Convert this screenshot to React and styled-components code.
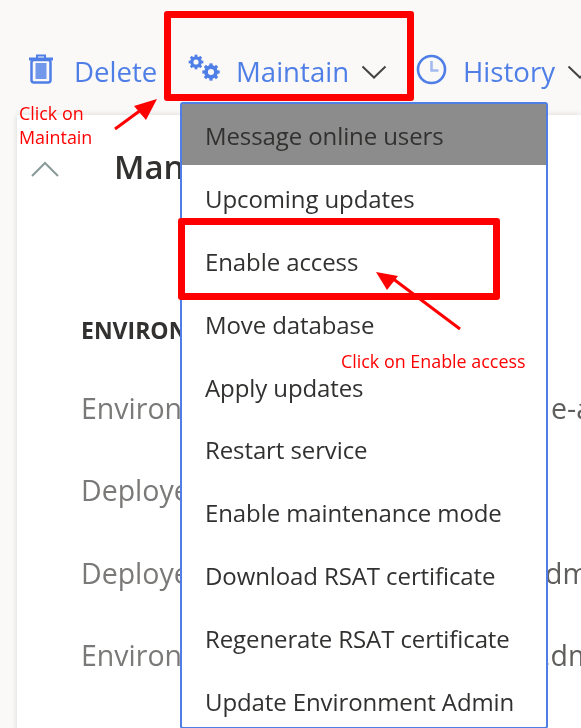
import React from "react";
import styled, { createGlobalStyle } from "styled-components";

const Global = createGlobalStyle`
  html, body { margin: 0; padding: 0; }
  body { background: #faf9f8; font-family: "Open Sans", "Noto Sans", sans-serif; }
`;

const Page = styled.div`
  position: relative;
  width: 581px;
  height: 728px;
  overflow: hidden;
  background: #faf9f8;
  filter: blur(0.35px);
`;

const Toolbar = styled.div`
  display: flex;
  align-items: center;
  height: 56px;
  padding: 43px 0 0 28px;
  white-space: nowrap;
`;

const ToolButton = styled.div`
  display: flex;
  align-items: center;
  flex: none;
  width: ${(p) => p.$w}px;
  color: #4f7fe6;
  font-size: 27.6px;
`;

const ToolIcon = styled.svg`
  flex: none;
  margin-bottom: 4px;
`;

const ToolLabel = styled.span`
  margin-left: ${(p) => p.$gap}px;
  margin-right: 12px;
`;

const ChevronIcon = styled.svg`
  flex: none;
  margin-top: 1px;
`;

const Card = styled.section`
  margin: 16px 0 0 17px;
  height: 620px;
  background: #fff;
  box-shadow: 0 0 6px rgba(0, 0, 0, 0.14);
  padding: 0 0 0 64px;
`;

const CardTitle = styled.h2`
  margin: 0;
  padding: 28px 0 0 33px;
  height: 75px;
  box-sizing: border-box;
  display: flex;
  align-items: center;
  font-size: 33px;
  font-weight: 600;
  line-height: 47px;
  color: #323130;
  white-space: nowrap;
`;

const Collapse = styled.svg`
  position: absolute;
  left: 30px;
  top: 160px;
`;

const SectionLabel = styled.div`
  margin-top: 125px;
  font-size: 23px;
  font-weight: 700;
  line-height: 30px;
  color: #323130;
  white-space: nowrap;
`;

const Rows = styled.div`
  margin-top: 46px;
  display: flex;
  flex-direction: column;
  gap: 48.3px;
`;

const Row = styled.div`
  display: flex;
  height: 34px;
  line-height: 34px;
  font-size: 28.5px;
  color: #7a7977;
  white-space: nowrap;
  margin-top: ${(p) => p.$drop || 0}px;
`;

const RowLabel = styled.span`
  width: ${(p) => p.$w}px;
  flex: none;
`;

const RowValue = styled.span`
  color: #605e5c;
  flex: none;
`;

const Menu = styled.ul`
  position: absolute;
  left: 180px;
  top: 102px;
  width: 368px;
  height: 627px;
  box-sizing: border-box;
  margin: 0;
  padding: 0;
  list-style: none;
  background: #fff;
  border: 2px solid #4f7fe6;
  border-radius: 3px;
`;

const MenuItem = styled.li`
  height: ${(p) => (p.$active ? 61 : 62.8)}px;
  box-sizing: border-box;
  display: flex;
  align-items: center;
  padding: ${(p) => (p.$active ? 2 : 4.6)}px 0 0 23px;
  font-size: 24px;
  letter-spacing: -0.1px;
  color: #323130;
  background: ${(p) => (p.$active ? "#8c8c8c" : "transparent")};
  white-space: nowrap;
`;

const RedBox = styled.div`
  position: absolute;
  box-sizing: border-box;
  left: ${(p) => p.$x}px;
  top: ${(p) => p.$y}px;
  width: ${(p) => p.$w}px;
  height: ${(p) => p.$h}px;
  border: 7px solid #ff0000;
  border-radius: 3px;
`;

const Note = styled.div`
  position: absolute;
  left: ${(p) => p.$x}px;
  top: ${(p) => p.$y}px;
  font-size: 17.9px;
  line-height: 24px;
  color: #ff0000;
  white-space: nowrap;
`;

const Overlay = styled.svg`
  position: absolute;
  left: 0;
  top: 0;
`;

const Trash = () => (
  <ToolIcon width="26" height="32" viewBox="0 0 26 32">
    <path d="M9 5V2.5h8V5" fill="none" stroke="#4f7fe6" strokeWidth="2" />
    <path d="M1 6h24" stroke="#4f7fe6" strokeWidth="3" />
    <rect x="3.5" y="7" width="19" height="22.5" rx="2.5" fill="none" stroke="#4f7fe6" strokeWidth="2.5" />
    <rect x="7.5" y="10" width="11" height="16" fill="#4f7fe6" opacity="0.8" />
  </ToolIcon>
);

const Gear = ({ cx, cy, r }) => {
  const teeth = [0, 45, 90, 135, 180, 225, 270, 315];
  return (
    <g>
      <circle cx={cx} cy={cy} r={r * 0.62} fill="none" stroke="#4f7fe6" strokeWidth={r * 0.48} />
      {teeth.map((a) => (
        <rect
          key={a}
          x={cx - r * 0.2}
          y={cy - r * 1.08}
          width={r * 0.4}
          height={r * 0.4}
          fill="#4f7fe6"
          transform={`rotate(${a} ${cx} ${cy})`}
        />
      ))}
    </g>
  );
};

const Gears = () => (
  <ToolIcon width="32" height="30" viewBox="0 0 32 30">
    <Gear cx={8} cy={8} r={6.8} />
    <Gear cx={23} cy={18} r={8} />
  </ToolIcon>
);

const Chevron = () => (
  <ChevronIcon width="26" height="14" viewBox="0 0 26 14">
    <path d="M1.5 1.5 13 12.5 24.5 1.5" fill="none" stroke="#444" strokeWidth="2" />
  </ChevronIcon>
);

const Clock = () => (
  <ToolIcon width="31" height="31" viewBox="0 0 31 31">
    <circle cx="15.5" cy="15.5" r="13.5" fill="none" stroke="#4f7fe6" strokeWidth="2.6" />
    <path d="M15.5 7v9.5h7" fill="none" stroke="#a3b9f0" strokeWidth="2.6" />
  </ToolIcon>
);

const menuItems = [
  "Message online users",
  "Upcoming updates",
  "Enable access",
  "Move database",
  "Apply updates",
  "Restart service",
  "Enable maintenance mode",
  "Download RSAT certificate",
  "Regenerate RSAT certificate",
  "Update Environment Admin",
];

const rows = [
  { label: "Environment", value: "e-a", w: 470 },
  { label: "Deployed", value: "", w: 465 },
  { label: "Deployed", value: "dm", w: 464 },
  { label: "Environment", value: ".dm", w: 462 },
  { label: "Environment", value: "a", w: 470, drop: 7 },
];

export default function App() {
  return (
    <Page>
      <Global />
      <Toolbar>
        <ToolButton $w={160}>
          <Trash />
          <ToolLabel $gap={20}>Delete</ToolLabel>
        </ToolButton>
        <ToolButton $w={228}>
          <Gears />
          <ToolLabel $gap={16}>Maintain</ToolLabel>
          <Chevron />
        </ToolButton>
        <ToolButton $w={200}>
          <Clock />
          <ToolLabel $gap={16}>History</ToolLabel>
          <Chevron />
        </ToolButton>
      </Toolbar>

      <Card>
        <CardTitle>Manage</CardTitle>
        <SectionLabel>ENVIRONMENT</SectionLabel>
        <Rows>
          {rows.map((row, i) => (
            <Row key={i} $drop={row.drop}>
              <RowLabel $w={row.w}>{row.label}</RowLabel>
              <RowValue>{row.value}</RowValue>
            </Row>
          ))}
        </Rows>
      </Card>

      <Collapse width="30" height="18" viewBox="0 0 30 18">
        <path d="M2 16 15 3 28 16" fill="none" stroke="#8a9a9a" strokeWidth="2" />
      </Collapse>

      <Menu>
        {menuItems.map((item, i) => (
          <MenuItem key={item} $active={i === 0}>{item}</MenuItem>
        ))}
      </Menu>

      <RedBox $x={164} $y={11} $w={250} $h={90} />
      <RedBox $x={178} $y={218} $w={322} $h={82} />

      <Note $x={19} $y={101}>Click on<br />Maintain</Note>
      <Note $x={341} $y={349}>Click on Enable access</Note>

      <Overlay width="581" height="728" viewBox="0 0 581 728">
        <path d="M115 129 145 107" stroke="#f00" strokeWidth="3" />
        <path d="M157 99 134 106 146 120Z" fill="#f00" />
        <path d="M460 329 392 278" stroke="#f00" strokeWidth="3" />
        <path d="M376 272 398 276 387 290Z" fill="#f00" />
      </Overlay>
    </Page>
  );
}
